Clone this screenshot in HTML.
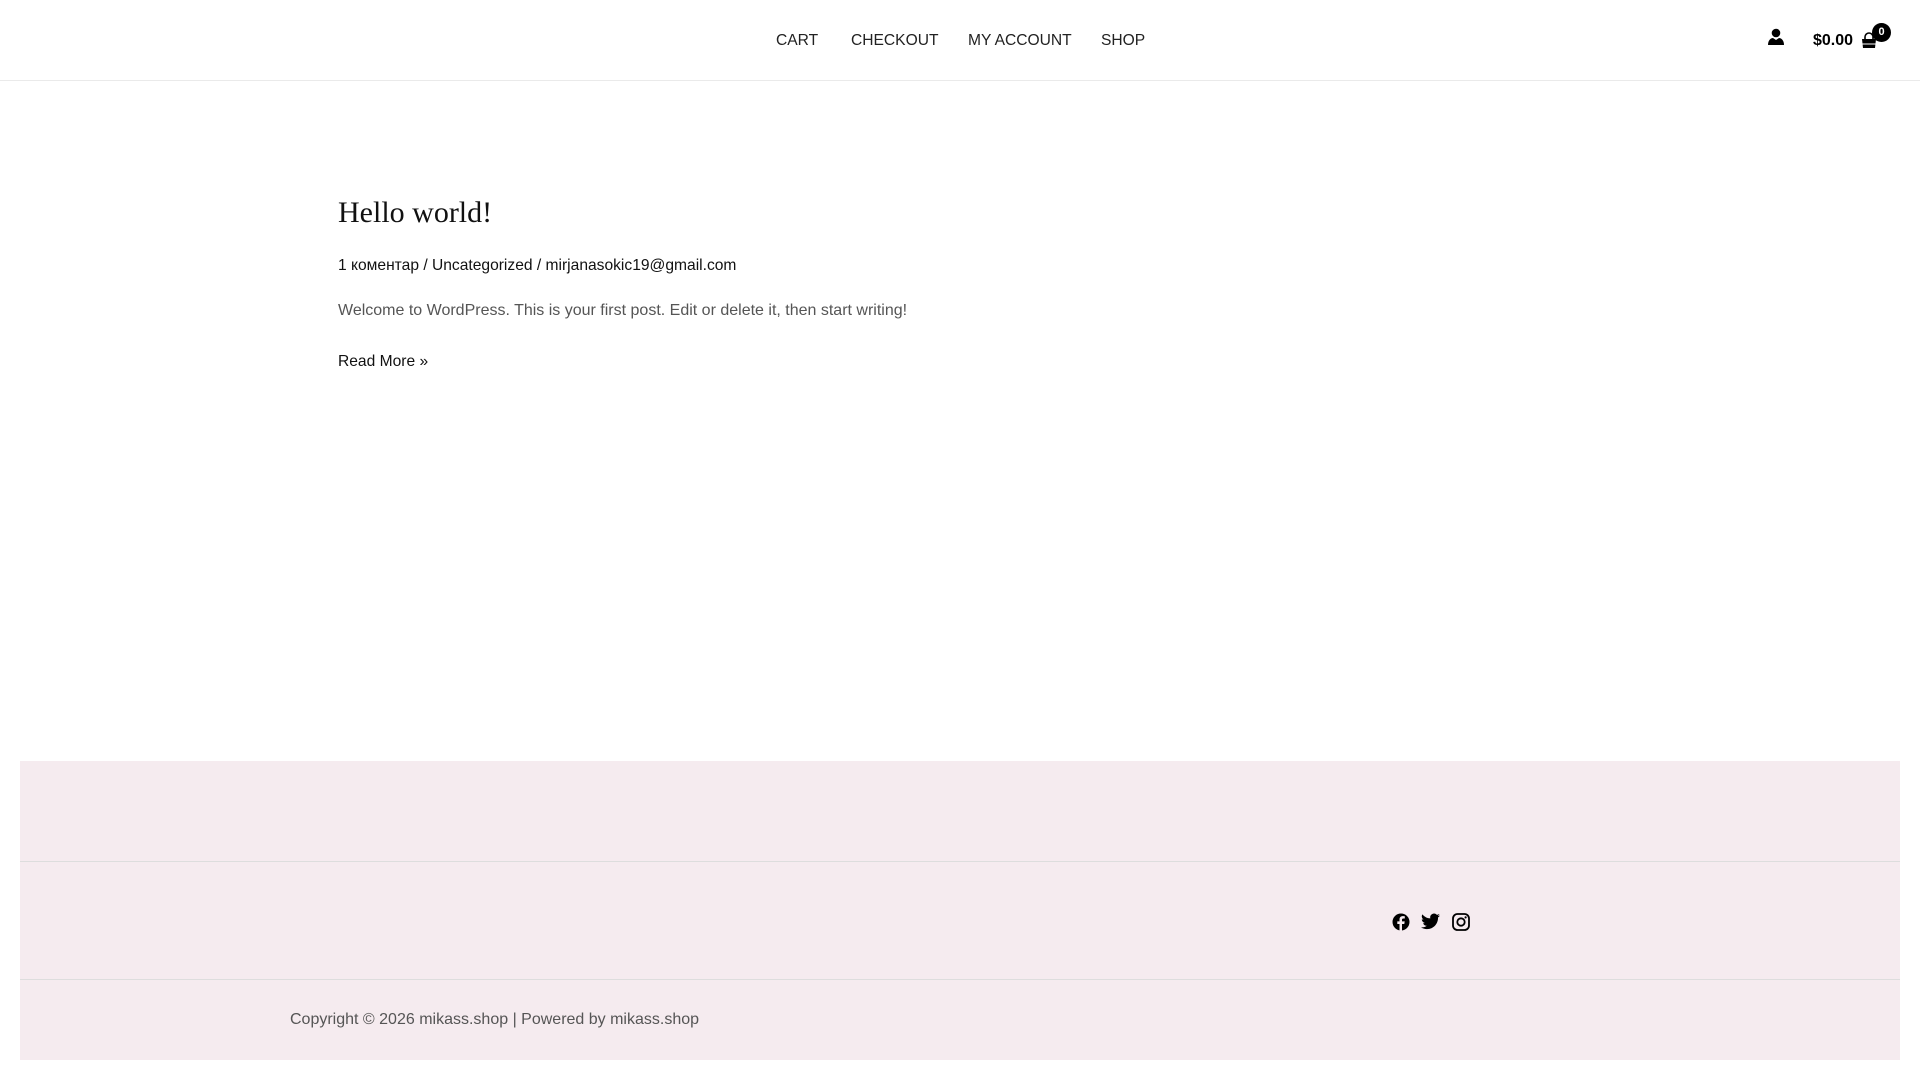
<!DOCTYPE html>
<html><head><meta charset="utf-8"><style>
*{margin:0;padding:0;box-sizing:border-box}
body{width:1920px;height:1080px;background:#fff;font-family:"Liberation Sans",sans-serif;position:relative;overflow:hidden;color:#222}
.a{position:absolute;white-space:nowrap}
header{position:absolute;left:0;top:0;width:1920px;height:81px;border-bottom:1px solid #eaeaea}
.nav{font-size:15.6px;color:#222;top:32px}
.foot{position:absolute;left:20px;width:1880px;background:#f5ebef}
</style></head><body>
<header>
<div class="a nav" style="left:776px">CART</div>
<div class="a nav" style="left:851px">CHECKOUT</div>
<div class="a nav" style="left:968px">MY ACCOUNT</div>
<div class="a nav" style="left:1101px">SHOP</div>
<svg class="a" style="left:1767px;top:28px" width="18" height="18" viewBox="0 0 18 18"><circle cx="9" cy="5" r="4.3" fill="#000"/><path d="M1 17c0-5 3-7 5-7l3 2 3-2c2 0 5 2 5 7z" fill="#000"/></svg>
<div class="a" style="left:1813px;top:32px;font-size:16px;font-weight:bold;color:#000">$0.00</div>
<svg class="a" style="left:1861px;top:32px" width="16" height="17" viewBox="0 0 16 17"><path d="M4 7V5a4 4 0 0 1 8 0v2" stroke="#000" stroke-width="1.6" fill="none"/><path d="M1 7h14l-1 9H2z" fill="#000"/><path d="M1 12h14" stroke="#fff" stroke-width="1"/></svg>
<div class="a" style="left:1872px;top:23px;width:19px;height:19px;border-radius:50%;background:#000;color:#fff;font-size:11px;font-weight:bold;text-align:center;line-height:19px">0</div>
</header>
<div class="a" style="left:338px;top:196px;font-family:'Liberation Serif',serif;font-size:30px;color:#111">Hello world!</div>
<div class="a" style="left:338px;top:257px;font-size:15.6px;color:#111">1 коментар / Uncategorized / mirjanasokic19@gmail.com</div>
<div class="a" style="left:338px;top:302px;font-size:16px;color:#555">Welcome to WordPress. This is your first post. Edit or delete it, then start writing!</div>
<div class="a" style="left:338px;top:353px;font-size:15.6px;color:#111">Read More »</div>
<div class="foot" style="top:761px;height:101px"></div>
<div class="foot" style="top:861px;height:118px;border-top:1px solid #ddd"></div>
<div class="foot" style="top:979px;height:81px;border-top:1px solid #ddd"></div>
<svg class="a" style="left:1392px;top:913px" width="18" height="18" viewBox="0 0 18 18"><circle cx="9" cy="9" r="8.5" fill="#000"/><path d="M10 18v-7h2.3l.4-2.6H10V6.8c0-.8.3-1.3 1.4-1.3h1.4V3.2c-.3 0-1.1-.1-2-.1-2 0-3.3 1.2-3.3 3.4v1.9H5.3V11h2.2v7z" fill="#f5ebef"/></svg>
<svg class="a" style="left:1421px;top:913px" width="19" height="17" viewBox="0 0 24 20"><path d="M24 2.4a10 10 0 0 1-2.8.8A5 5 0 0 0 23.3.4a10 10 0 0 1-3.1 1.2 4.9 4.9 0 0 0-8.4 4.5A14 14 0 0 1 1.700 1a4.9 4.9 0 0 0 1.5 6.6A4.9 4.9 0 0 1 1 7v.1a4.9 4.9 0 0 0 3.9 4.8 5 5 0 0 1-2.2.1 4.9 4.9 0 0 0 4.6 3.4A9.9 9.9 0 0 1 0 17.4 14 14 0 0 0 7.5 19.6c9.1 0 14-7.5 14-14v-.6A10 10 0 0 0 24 2.4z" fill="#000"/></svg>
<svg class="a" style="left:1452px;top:913px" width="18" height="18" viewBox="0 0 18 18"><rect x="1" y="1" width="16" height="16" rx="4.5" fill="none" stroke="#000" stroke-width="1.8"/><circle cx="9" cy="9" r="3.7" fill="none" stroke="#000" stroke-width="1.8"/><circle cx="13.6" cy="4.4" r="1.1" fill="#000"/></svg>
<div class="a" style="left:290px;top:1011px;font-size:16px;color:#555">Copyright © 2026 mikass.shop | Powered by mikass.shop</div>
</body></html>
